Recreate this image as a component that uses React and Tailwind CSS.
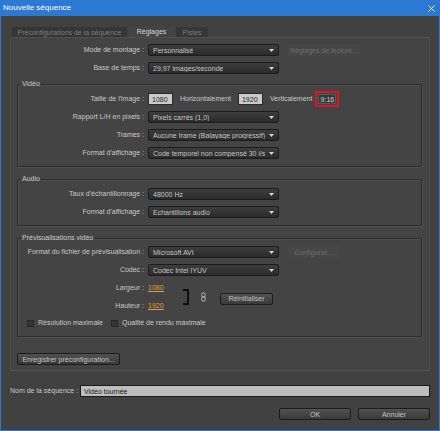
import React from "react";

const Caret = () => (
  <svg width="5" height="3" viewBox="0 0 5 3" className="shrink-0">
    <path d="M0 0h5L2.5 3z" fill="#d6d6d6" />
  </svg>
);

const Select = ({ value }) => (
  <div className="flex h-[12px] w-[131px] items-center justify-between rounded-[2px] border border-[#1b1b1b] bg-gradient-to-b from-[#3d3d3d] to-[#2b2b2b] pl-[4px] pr-[4px] text-[#c6c6c6]">
    <span className="truncate leading-none">{value}</span>
    <Caret />
  </div>
);

const Row = ({ label, labelW = "w-[131px]", h = "h-[18px]", children }) => (
  <div className={`flex items-center ${h}`}>
    <div className={`${labelW} shrink-0 pr-[4px] text-right text-[#c9c9c9]`}>{label}</div>
    <div className="flex items-center">{children}</div>
  </div>
);

const Field = ({ value, w = "w-[25px]" }) => (
  <div className={`${w} flex h-[12px] items-center border border-[#2a2a2a] bg-[#cbcbcb] pl-[3px] leading-none text-[#1e1e1e]`}>
    {value}
  </div>
);

const GhostButton = ({ children, w }) => (
  <div className={`${w} ml-[9px] flex h-[12px] items-center justify-center rounded-[1px] bg-[#474747] leading-none text-[#6c6c6c]`}>
    {children}
  </div>
);

const Button = ({ children, w, className = "" }) => (
  <div
    className={`${w} ${className} flex h-[12px] items-center justify-center rounded-[2px] border border-[#1c1c1c] bg-gradient-to-b from-[#515151] to-[#3a3a3a] leading-none text-[#c4c4c4]`}
  >
    {children}
  </div>
);

const Group = ({ title, className = "", children }) => (
  <fieldset className={`border border-[#2e2e2e] shadow-[inset_1px_1px_0_#4f4f4f,1px_1px_0_#4f4f4f] ${className}`}>
    <legend className="ml-[3px] px-[1px] leading-[10px] text-[#c9c9c9]">{title}</legend>
    {children}
  </fieldset>
);

const Checkbox = ({ label }) => (
  <div className="flex items-center gap-[4px]">
    <div className="h-[7px] w-[7px] border border-[#262626] bg-[#353535]" />
    <span className="text-[#c9c9c9]">{label}</span>
  </div>
);

const Link = () => (
  <svg width="5" height="10" viewBox="0 0 5 10">
    <rect x="0.75" y="0.75" width="3.5" height="4.5" rx="1.7" fill="none" stroke="#bdbdbd" strokeWidth="1" />
    <rect x="0.75" y="4.75" width="3.5" height="4.5" rx="1.7" fill="none" stroke="#bdbdbd" strokeWidth="1" />
  </svg>
);

export default function App() {
  const inner = "w-[130px]";
  return (
    <div className="flex h-[431px] w-[440px] flex-col bg-[#2b79d3] font-['Liberation_Sans',Arial,sans-serif] text-[7px]">
      {/* Title bar */}
      <div className="flex h-[16px] shrink-0 items-center justify-between pl-[3px] pr-[5px] text-[8px] text-white">
        <span>Nouvelle séquence</span>
        <svg width="7" height="7" viewBox="0 0 7 7">
          <path d="M0.5 0.5l6 6M6.5 0.5l-6 6" stroke="#fff" strokeWidth="1" />
        </svg>
      </div>

      {/* Body */}
      <div className="mx-[1px] mb-[1px] flex flex-1 flex-col bg-[#414141] px-[9px] pt-[11px]">
        {/* Tabs */}
        <div className="flex h-[10px] items-end gap-[2px] pl-[2px]">
          <div className="flex h-[10px] w-[115px] items-center justify-center bg-[#363636] leading-none text-[#7e7e7e]">
            Préconfigurations de la séquence
          </div>
          <div className="flex h-[11px] w-[45px] items-center justify-center bg-[#444444] leading-none text-[#d8d8d8]">
            Réglages
          </div>
          <div className="flex h-[10px] w-[32px] items-center justify-center bg-[#363636] leading-none text-[#7e7e7e]">
            Pistes
          </div>
        </div>

        {/* Tab panel */}
        <div className="flex flex-col border border-[#505050] bg-[#444444] pb-[5px] pl-[6px] pr-[7px] pt-[3px]">
          <Row label="Mode de montage :">
            <Select value="Personnalisé" />
            <GhostButton w="w-[72px]">Réglages de lecture...</GhostButton>
          </Row>
          <Row label="Base de temps :">
            <Select value="29,97 images/seconde" />
          </Row>

          <Group title="Vidéo" className="mt-[2px] pb-[4px] pt-[1px]">
            <Row label="Taille de l'image :" labelW={inner}>
              <Field value="1080" />
              <span className="ml-[7px] text-[#c9c9c9]">Horizontalement</span>
              <Field value="1920" w="w-[25px] ml-[7px]" />
              <span className="ml-[7px] text-[#c9c9c9]">Verticalement</span>
              <div className="ml-[3px] flex h-[16px] w-[24px] items-center justify-center border-2 border-[#e3121c]">
                <div className="flex h-[10px] w-[18px] items-center justify-center border border-[#3d6464] bg-[#333838] leading-none text-[#d6d6d6]">
                  9:16
                </div>
              </div>
            </Row>
            <Row label="Rapport L/H en pixels :" labelW={inner}>
              <Select value="Pixels carrés (1,0)" />
            </Row>
            <Row label="Trames :" labelW={inner}>
              <Select value="Aucune trame (Balayage progressif)" />
            </Row>
            <Row label="Format d'affichage :" labelW={inner}>
              <Select value="Code temporel non compensé 30 i/s" />
            </Row>
          </Group>

          <Group title="Audio" className="mt-[7px] pb-[4px] pt-[1px]">
            <Row label="Taux d'échantillonnage :" labelW={inner}>
              <Select value="48000 Hz" />
            </Row>
            <Row label="Format d'affichage :" labelW={inner}>
              <Select value="Echantillons audio" />
            </Row>
          </Group>

          <Group title="Prévisualisations vidéo" className="mt-[7px] pb-[5px]">
            <Row label="Format du fichier de prévisualisation :" labelW={inner}>
              <Select value="Microsoft AVI" />
              <GhostButton w="w-[51px]">Configurer...</GhostButton>
            </Row>
            <Row label="Codec :" labelW={inner}>
              <Select value="Codec Intel IYUV" />
            </Row>
            <div className="flex items-center">
              <div className="flex flex-col">
                <Row label="Largeur :" labelW={inner}>
                  <span className="w-[35px] text-[#e0a232]">
                    <span className="border-b border-[#e0a232]">1080</span>
                  </span>
                </Row>
                <Row label="Hauteur :" labelW={inner}>
                  <span className="w-[35px] text-[#e0a232]">
                    <span className="border-b border-[#e0a232]">1920</span>
                  </span>
                </Row>
              </div>
              <div className="h-[16px] w-[6px] border-y-2 border-r-2 border-[#0f0f0f]" />
              <div className="ml-[12px]">
                <Link />
              </div>
              <Button w="w-[53px]" className="ml-[14px] mt-[3px]">
                Réinitialiser
              </Button>
            </div>
            <div className="flex h-[16px] items-center gap-[8px] pl-[9px]">
              <Checkbox label="Résolution maximale" />
              <Checkbox label="Qualité de rendu maximale" />
            </div>
          </Group>

          <Button w="w-[103px]" className="mt-[16px]">
            Enregistrer préconfiguration...
          </Button>
        </div>

        {/* Sequence name */}
        <div className="mt-[14px] flex h-[12px] items-center">
          <span className="w-[70px] shrink-0 text-[#c9c9c9]">Nom de la séquence :</span>
          <div className="flex h-[12px] flex-1 items-center border border-[#1a1a1a] bg-[#bdbdbd] pl-[3px] leading-none text-[#141414]">
            Vidéo tournée
          </div>
        </div>

        {/* Footer buttons */}
        <div className="mt-[11px] flex justify-end gap-[7px]">
          <Button w="w-[72px]">OK</Button>
          <Button w="w-[72px]">Annuler</Button>
        </div>
      </div>
    </div>
  );
}
